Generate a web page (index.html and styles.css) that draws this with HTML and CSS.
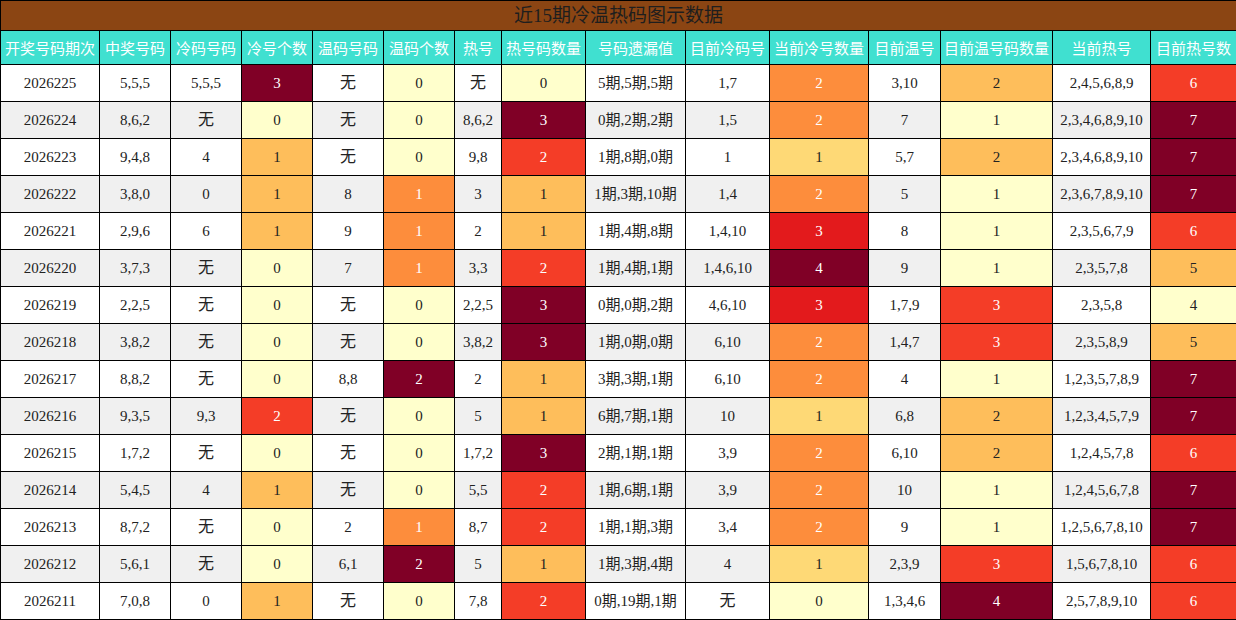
FILE: index.html
```html
<!DOCTYPE html>
<html lang="zh">
<head>
<meta charset="utf-8">
<title>近15期冷温热码图示数据</title>
<link rel="stylesheet" href="styles.css">
</head>
<body>
<table class="grid">
<colgroup>
<col style="width:99px"><col style="width:71px"><col style="width:71px"><col style="width:71px"><col style="width:71px"><col style="width:71px"><col style="width:47px"><col style="width:84px"><col style="width:100px"><col style="width:84px"><col style="width:99px"><col style="width:72px"><col style="width:112px"><col style="width:98px"><col style="width:86px">
</colgroup>
<thead>
<tr class="title"><th colspan="15">近15期冷温热码图示数据</th></tr>
<tr class="head">
<th>开奖号码期次</th><th>中奖号码</th><th>冷码号码</th><th>冷号个数</th><th>温码号码</th><th>温码个数</th><th>热号</th><th>热号码数量</th><th>号码遗漏值</th><th>目前冷码号</th><th>当前冷号数量</th><th>目前温号</th><th>目前温号码数量</th><th>当前热号</th><th>目前热号数</th>
</tr>
</thead>
<tbody>
<tr><td>2026225</td><td>5,5,5</td><td>5,5,5</td><td class="c6">3</td><td class="cn">无</td><td class="c0">0</td><td class="cn">无</td><td class="c0">0</td><td>5期,5期,5期</td><td>1,7</td><td class="c3">2</td><td>3,10</td><td class="c2">2</td><td>2,4,5,6,8,9</td><td class="c5">6</td></tr>
<tr><td>2026224</td><td>8,6,2</td><td class="cn">无</td><td class="c0">0</td><td class="cn">无</td><td class="c0">0</td><td>8,6,2</td><td class="c6">3</td><td>0期,2期,2期</td><td>1,5</td><td class="c3">2</td><td>7</td><td class="c0">1</td><td>2,3,4,6,8,9,10</td><td class="c6">7</td></tr>
<tr><td>2026223</td><td>9,4,8</td><td>4</td><td class="c2">1</td><td class="cn">无</td><td class="c0">0</td><td>9,8</td><td class="c5">2</td><td>1期,8期,0期</td><td>1</td><td class="c1">1</td><td>5,7</td><td class="c2">2</td><td>2,3,4,6,8,9,10</td><td class="c6">7</td></tr>
<tr><td>2026222</td><td>3,8,0</td><td>0</td><td class="c2">1</td><td>8</td><td class="c3">1</td><td>3</td><td class="c2">1</td><td>1期,3期,10期</td><td>1,4</td><td class="c3">2</td><td>5</td><td class="c0">1</td><td>2,3,6,7,8,9,10</td><td class="c6">7</td></tr>
<tr><td>2026221</td><td>2,9,6</td><td>6</td><td class="c2">1</td><td>9</td><td class="c3">1</td><td>2</td><td class="c2">1</td><td>1期,4期,8期</td><td>1,4,10</td><td class="c4">3</td><td>8</td><td class="c0">1</td><td>2,3,5,6,7,9</td><td class="c5">6</td></tr>
<tr><td>2026220</td><td>3,7,3</td><td class="cn">无</td><td class="c0">0</td><td>7</td><td class="c3">1</td><td>3,3</td><td class="c5">2</td><td>1期,4期,1期</td><td>1,4,6,10</td><td class="c6">4</td><td>9</td><td class="c0">1</td><td>2,3,5,7,8</td><td class="c2">5</td></tr>
<tr><td>2026219</td><td>2,2,5</td><td class="cn">无</td><td class="c0">0</td><td class="cn">无</td><td class="c0">0</td><td>2,2,5</td><td class="c6">3</td><td>0期,0期,2期</td><td>4,6,10</td><td class="c4">3</td><td>1,7,9</td><td class="c5">3</td><td>2,3,5,8</td><td class="c0">4</td></tr>
<tr><td>2026218</td><td>3,8,2</td><td class="cn">无</td><td class="c0">0</td><td class="cn">无</td><td class="c0">0</td><td>3,8,2</td><td class="c6">3</td><td>1期,0期,0期</td><td>6,10</td><td class="c3">2</td><td>1,4,7</td><td class="c5">3</td><td>2,3,5,8,9</td><td class="c2">5</td></tr>
<tr><td>2026217</td><td>8,8,2</td><td class="cn">无</td><td class="c0">0</td><td>8,8</td><td class="c6">2</td><td>2</td><td class="c2">1</td><td>3期,3期,1期</td><td>6,10</td><td class="c3">2</td><td>4</td><td class="c0">1</td><td>1,2,3,5,7,8,9</td><td class="c6">7</td></tr>
<tr><td>2026216</td><td>9,3,5</td><td>9,3</td><td class="c5">2</td><td class="cn">无</td><td class="c0">0</td><td>5</td><td class="c2">1</td><td>6期,7期,1期</td><td>10</td><td class="c1">1</td><td>6,8</td><td class="c2">2</td><td>1,2,3,4,5,7,9</td><td class="c6">7</td></tr>
<tr><td>2026215</td><td>1,7,2</td><td class="cn">无</td><td class="c0">0</td><td class="cn">无</td><td class="c0">0</td><td>1,7,2</td><td class="c6">3</td><td>2期,1期,1期</td><td>3,9</td><td class="c3">2</td><td>6,10</td><td class="c2">2</td><td>1,2,4,5,7,8</td><td class="c5">6</td></tr>
<tr><td>2026214</td><td>5,4,5</td><td>4</td><td class="c2">1</td><td class="cn">无</td><td class="c0">0</td><td>5,5</td><td class="c5">2</td><td>1期,6期,1期</td><td>3,9</td><td class="c3">2</td><td>10</td><td class="c0">1</td><td>1,2,4,5,6,7,8</td><td class="c6">7</td></tr>
<tr><td>2026213</td><td>8,7,2</td><td class="cn">无</td><td class="c0">0</td><td>2</td><td class="c3">1</td><td>8,7</td><td class="c5">2</td><td>1期,1期,3期</td><td>3,4</td><td class="c3">2</td><td>9</td><td class="c0">1</td><td>1,2,5,6,7,8,10</td><td class="c6">7</td></tr>
<tr><td>2026212</td><td>5,6,1</td><td class="cn">无</td><td class="c0">0</td><td>6,1</td><td class="c6">2</td><td>5</td><td class="c2">1</td><td>1期,3期,4期</td><td>4</td><td class="c1">1</td><td>2,3,9</td><td class="c5">3</td><td>1,5,6,7,8,10</td><td class="c5">6</td></tr>
<tr><td>2026211</td><td>7,0,8</td><td>0</td><td class="c2">1</td><td class="cn">无</td><td class="c0">0</td><td>7,8</td><td class="c5">2</td><td>0期,19期,1期</td><td class="cn">无</td><td class="c0">0</td><td>1,3,4,6</td><td class="c6">4</td><td>2,5,7,8,9,10</td><td class="c5">6</td></tr>
</tbody>
</table>
</body>
</html>
```

FILE: styles.css
```css
html, body {
  margin: 0;
  padding: 0;
  background: #ffffff;
}

.grid {
  width: 1236px;
  table-layout: fixed;
  border-collapse: collapse;
  font-family: "Liberation Serif", "Noto Sans CJK SC", serif;
  font-size: 15px;
  color: #222222;
}

.grid th,
.grid td {
  border: 1px solid #000000;
  padding: 0;
  text-align: center;
  vertical-align: middle;
  white-space: nowrap;
  overflow: hidden;
  line-height: 18px;
}

.title th {
  height: 29px;
  background: #8b4513;
  color: #1e1e1e;
  font-family: "Liberation Serif", "Noto Sans CJK SC", sans-serif;
  font-size: 19px;
  font-weight: normal;
  line-height: 26px;
}

.head th {
  height: 33px;
  background: #40e0d0;
  color: #ffffff;
  font-family: "Noto Sans CJK SC", sans-serif;
  font-size: 15px;
  font-weight: normal;
}

.grid tbody tr {
  background: #ffffff;
}

.grid tbody tr:nth-child(even) {
  background: #f0f0f0;
}

.grid tbody td {
  height: 36px;
}

.grid tbody td.cn {
  font-size: 16px;
  line-height: 20px;
}

.grid tbody td.c0 { background: #ffffcc; color: #222222; }
.grid tbody td.c1 { background: #fed976; color: #222222; }
.grid tbody td.c2 { background: #febe5b; color: #222222; }
.grid tbody td.c3 { background: #fd8d3c; color: #ffffff; }
.grid tbody td.c4 { background: #e31a1c; color: #ffffff; }
.grid tbody td.c5 { background: #f43d27; color: #ffffff; }
.grid tbody td.c6 { background: #800026; color: #ffffff; }
```
